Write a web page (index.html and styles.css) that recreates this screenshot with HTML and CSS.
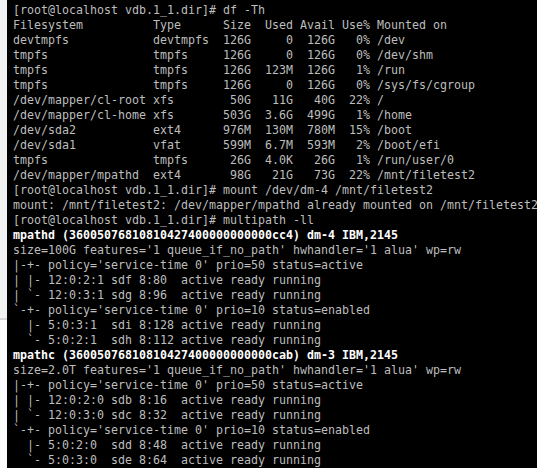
FILE: index.html
```html
<!DOCTYPE html>
<html>
<head>
<meta charset="utf-8">
<link rel="stylesheet" href="styles.css">
</head>
<body>
<div class="window">
  <div class="side">
    <div class="side-top"></div>
    <div class="side-sep"></div>
    <div class="side-list"></div>
  </div>
  <div class="term">
<pre class="out">[root@localhost vdb.1_1.dir]# df -Th
Filesystem          Type      Size  Used Avail Use% Mounted on
devtmpfs            devtmpfs  126G     0  126G   0% /dev
tmpfs               tmpfs     126G     0  126G   0% /dev/shm
tmpfs               tmpfs     126G  123M  126G   1% /run
tmpfs               tmpfs     126G     0  126G   0% /sys/fs/cgroup
/dev/mapper/cl-root xfs        50G   11G   40G  22% /
/dev/mapper/cl-home xfs       503G  3.6G  499G   1% /home
/dev/sda2           ext4      976M  130M  780M  15% /boot
/dev/sda1           vfat      599M  6.7M  593M   2% /boot/efi
tmpfs               tmpfs      26G  4.0K   26G   1% /run/user/0
/dev/mapper/mpathd  ext4       98G   21G   73G  22% /mnt/filetest2
[root@localhost vdb.1_1.dir]# mount /dev/dm-4 /mnt/filetest2
mount: /mnt/filetest2: /dev/mapper/mpathd already mounted on /mnt/filetest2
[root@localhost vdb.1_1.dir]# multipath -ll
<b class="hl">mpathd (36005076810810427400000000000cc4) dm-4 IBM,2145</b>
size=100G features='1 queue_if_no_path' hwhandler='1 alua' wp=rw
|-+- policy='service-time 0' prio=50 status=active
| |- 12:0:2:1 sdf 8:80  active ready running
| `- 12:0:3:1 sdg 8:96  active ready running
`-+- policy='service-time 0' prio=10 status=enabled
  |- 5:0:3:1  sdi 8:128 active ready running
  `- 5:0:2:1  sdh 8:112 active ready running
<b class="hl">mpathc (36005076810810427400000000000cab) dm-3 IBM,2145</b>
size=2.0T features='1 queue_if_no_path' hwhandler='1 alua' wp=rw
|-+- policy='service-time 0' prio=50 status=active
| |- 12:0:2:0 sdb 8:16  active ready running
| `- 12:0:3:0 sdc 8:32  active ready running
`-+- policy='service-time 0' prio=10 status=enabled
  |- 5:0:2:0  sdd 8:48  active ready running
  `- 5:0:3:0  sde 8:64  active ready running</pre>
  </div>
</div>
</body>
</html>
```
FILE: styles.css
```css
html, body {
  margin: 0;
  padding: 0;
  width: 537px;
  height: 468px;
  overflow: hidden;
  background: #000;
}
.window {
  display: flex;
  width: 537px;
  height: 468px;
}
.side {
  flex: 0 0 7px;
  display: flex;
  flex-direction: column;
  background: #fbfbfb;
}
.side-top {
  height: 318px;
  background: #f2f2f2;
}
.side-sep {
  height: 2px;
  background: #d6d6d6;
}
.side-list {
  flex: 1;
  background: repeating-linear-gradient(to bottom, #fbfbfb 0, #fbfbfb 21px, #d4d4d4 21px, #d4d4d4 22px);
  background-size: 100% 21.2px;
}
.term {
  flex: 1;
  min-width: 0;
  background: #000;
  padding: 3px 0 0 6px;
  overflow: hidden;
}
.out {
  margin: 0;
  font-family: "DejaVu Sans Mono", monospace;
  font-size: 11.63px;
  line-height: 15px;
  color: #bdbdbd;
  white-space: pre;
}
.hl {
  color: #ffffff;
  font-weight: bold;
}
```
